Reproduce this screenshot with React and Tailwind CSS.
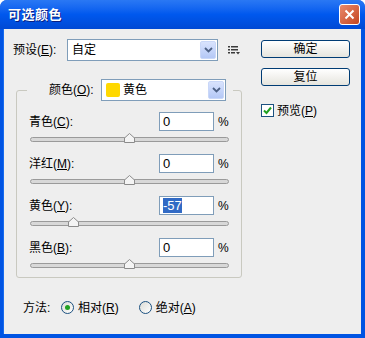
import React from 'react'

const ui = "font-['Liberation_Sans','Noto_Sans_CJK_SC',sans-serif]"

function DropBtn() {
  return (
    <div className="mr-[1px] flex h-[18px] w-[16px] items-center justify-center rounded-[2px] border border-[#C9D7F8] bg-gradient-to-b from-[#D9E3FD] to-[#B4C8F6]">
      <svg width="9" height="6" viewBox="0 0 9 6">
        <path d="M1 1 L4.5 4.5 L8 1" fill="none" stroke="#4D6185" strokeWidth="1.8" />
      </svg>
    </div>
  )
}

function Combo({ className, children }) {
  return (
    <div className={`flex h-[22px] items-center border border-[#7F9DB9] bg-white ${className}`}>
      <div className="flex flex-1 items-center pl-[4px] text-[12px] leading-none">{children}</div>
      <DropBtn />
    </div>
  )
}

function XpButton({ children }) {
  return (
    <button className="flex h-[18px] w-[89px] items-center justify-center rounded-[3px] border border-[#003C74] bg-gradient-to-b from-white to-[#E6E5DE] text-[12px] leading-none text-black">
      {children}
    </button>
  )
}

function SliderRow({ label, k, value, selected }) {
  // thumb centre: 0 sits mid-track, each percent ~0.98px
  const center = 99 + value * 0.98
  return (
    <div>
      <div className="flex h-[19px] items-center">
        <span className="w-[130px] text-[12px] leading-none">
          {label}(<u>{k}</u>):
        </span>
        <div className="flex h-[19px] w-[55px] items-center border border-[#7F9DB9] bg-white pl-[3px] text-[13px] leading-none">
          {selected ? <span className="bg-[#316AC5] py-[1px] text-white">{value}</span> : value}
        </div>
        <span className="ml-[4px] text-[12px] leading-none">%</span>
      </div>
      <div className="relative mt-[1px] ml-[1px] h-[11px] w-[199px]">
        <div className="absolute top-[5px] right-0 left-0 h-[5px] rounded-full border border-[#9A9A9A] bg-[#D8D8D8]" />
        <svg className="absolute top-[1px]" style={{ left: center - 5.5 }} width="11" height="10" viewBox="0 0 11 10">
          <path d="M5.5 0.5 L10.5 5 L10.5 9.5 L0.5 9.5 L0.5 5 Z" fill="#F4F4F4" stroke="#8C8C8C" />
        </svg>
      </div>
    </div>
  )
}

function Radio({ checked, children }) {
  return (
    <div className="flex items-center gap-[4px]">
      <div className="flex h-[13px] w-[13px] items-center justify-center rounded-full border border-[#1C5180] bg-gradient-to-br from-[#DCDCD6] to-white">
        {checked && <div className="h-[5px] w-[5px] rounded-full bg-[#21A121]" />}
      </div>
      <span className="text-[12px] leading-none">{children}</span>
    </div>
  )
}

export default function App() {
  return (
    <div className={`h-[338px] w-[365px] bg-white text-black ${ui}`}>
      <div className="flex h-full flex-col overflow-hidden rounded-t-[7px] bg-[#0054E3]">
        <div className="flex h-[29px] shrink-0 items-center bg-gradient-to-b from-[#2A78F4] via-[#0058EE] to-[#0049D4] pr-[5px] pl-[8px]">
          <span className="text-[13px] font-bold tracking-[0.5px] text-white [text-shadow:1px_1px_0_#0A1E80]">可选颜色</span>
          <button className="ml-auto flex h-[21px] w-[21px] items-center justify-center rounded-[3px] border border-white bg-gradient-to-br from-[#E9896A] to-[#C4441E]">
            <svg width="11" height="11" viewBox="0 0 11 11">
              <path d="M1.5 1.5 L9.5 9.5 M9.5 1.5 L1.5 9.5" stroke="white" strokeWidth="2" />
            </svg>
          </button>
        </div>

        <div className="mr-[4px] mb-[4px] ml-[3px] flex flex-1 border-l border-[#166AEE] bg-[#EEEEEE]">
          <div className="flex w-[255px] flex-col">
            <div className="mt-[10px] flex h-[22px] items-center pl-[9px]">
              <span className="w-[54px] text-[12px] leading-none">
                预设(<u>E</u>):
              </span>
              <Combo className="w-[151px]">自定</Combo>
              <svg className="ml-[10px]" width="12" height="9" viewBox="0 0 12 9">
                <rect x="0" y="0" width="2" height="1.5" fill="#3A3A3A" />
                <rect x="0" y="3" width="2" height="1.5" fill="#3A3A3A" />
                <rect x="0" y="6" width="2" height="1.5" fill="#3A3A3A" />
                <rect x="3" y="0" width="7" height="1.5" fill="#3A3A3A" />
                <rect x="3" y="3" width="7" height="1.5" fill="#3A3A3A" />
                <rect x="3" y="6" width="4" height="1.5" fill="#3A3A3A" />
                <path d="M8 6 L12 6 L10 8.5 Z" fill="#3A3A3A" />
              </svg>
            </div>

            <fieldset className="mt-[18px] ml-[12px] w-[226px] rounded-[3px] border border-[#C9C9C0] p-0">
              <legend className="ml-[10px] flex w-[206px] items-center bg-[#EEEEEE] pl-[22px]">
                <span className="w-[52px] text-[12px] leading-none">
                  颜色(<u>O</u>):
                </span>
                <Combo className="w-[125px]">
                  <span className="mr-[3px] h-[14px] w-[14px] rounded-[2px] bg-[#FFD800]" />
                  黄色
                </Combo>
              </legend>
              <div className="flex flex-col gap-[11px] pt-[11px] pb-[8px] pl-[12px]">
                <SliderRow label="青色" k="C" value={0} />
                <SliderRow label="洋红" k="M" value={0} />
                <SliderRow label="黄色" k="Y" value={-57} selected />
                <SliderRow label="黑色" k="B" value={0} />
              </div>
            </fieldset>

            <div className="mt-[23px] flex items-center pl-[19px]">
              <span className="w-[38px] text-[12px] leading-none">方法:</span>
              <Radio checked>
                相对(<u>R</u>)
              </Radio>
              <div className="ml-[20px]">
                <Radio>
                  绝对(<u>A</u>)
                </Radio>
              </div>
            </div>
          </div>

          <div className="mt-[11px] ml-[2px] flex flex-col">
            <XpButton>确定</XpButton>
            <div className="mt-[10px]">
              <XpButton>复位</XpButton>
            </div>
            <div className="mt-[18px] flex items-center gap-[3px]">
              <div className="flex h-[13px] w-[13px] items-center justify-center border border-[#1C5180] bg-white">
                <svg width="9" height="9" viewBox="0 0 9 9">
                  <path d="M1 4.5 L3.5 7 L8 1.5" fill="none" stroke="#21A121" strokeWidth="2" />
                </svg>
              </div>
              <span className="text-[12px] leading-none">
                预览(<u>P</u>)
              </span>
            </div>
          </div>
        </div>
      </div>
    </div>
  )
}
